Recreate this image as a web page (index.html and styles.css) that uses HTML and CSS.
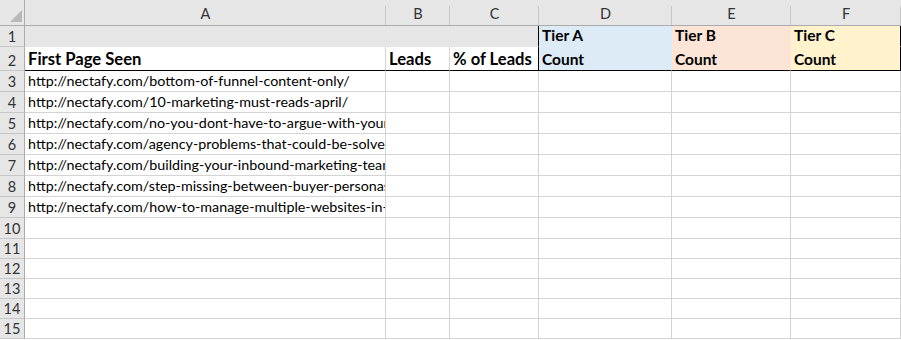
FILE: index.html
```html
<!DOCTYPE html>
<html>
<head>
<meta charset="utf-8">
<link rel="stylesheet" href="styles.css">
</head>
<body>
<div class="sheet">
  <div class="corner"><svg width="12" height="12" viewBox="0 0 12 12"><polygon points="12,0 12,12 0,12" fill="#b9b9b9"/></svg></div>
  <div class="colhead">A</div>
  <div class="colhead">B</div>
  <div class="colhead">C</div>
  <div class="colhead">D</div>
  <div class="colhead">E</div>
  <div class="colhead">F</div>

  <div class="rowhead">1</div>
  <div class="cell gray"></div>
  <div class="cell gray"></div>
  <div class="cell gray rb"></div>
  <div class="cell tier tier-a bold">Tier A</div>
  <div class="cell tier tier-b bold">Tier B</div>
  <div class="cell tier tier-c bold rb">Tier C</div>

  <div class="rowhead">2</div>
  <div class="cell bb bold big">First Page Seen</div>
  <div class="cell bb bold big">Leads</div>
  <div class="cell bb bold big rb">% of Leads</div>
  <div class="cell tier tier-a bb bold">Count</div>
  <div class="cell tier tier-b bb bold">Count</div>
  <div class="cell tier tier-c bb bold rb">Count</div>

  <div class="rowhead">3</div>
  <div class="cell url">http://nectafy.com/bottom-of-funnel-content-only/</div>
  <div class="cell"></div><div class="cell"></div><div class="cell"></div><div class="cell"></div><div class="cell"></div>

  <div class="rowhead">4</div>
  <div class="cell url">http://nectafy.com/10-marketing-must-reads-april/</div>
  <div class="cell"></div><div class="cell"></div><div class="cell"></div><div class="cell"></div><div class="cell"></div>

  <div class="rowhead">5</div>
  <div class="cell url">http://nectafy.com/no-you-dont-have-to-argue-with-your-boss/</div>
  <div class="cell"></div><div class="cell"></div><div class="cell"></div><div class="cell"></div><div class="cell"></div>

  <div class="rowhead">6</div>
  <div class="cell url">http://nectafy.com/agency-problems-that-could-be-solved/</div>
  <div class="cell"></div><div class="cell"></div><div class="cell"></div><div class="cell"></div><div class="cell"></div>

  <div class="rowhead">7</div>
  <div class="cell url">http://nectafy.com/building-your-inbound-marketing-team/</div>
  <div class="cell"></div><div class="cell"></div><div class="cell"></div><div class="cell"></div><div class="cell"></div>

  <div class="rowhead">8</div>
  <div class="cell url">http://nectafy.com/step-missing-between-buyer-personas/</div>
  <div class="cell"></div><div class="cell"></div><div class="cell"></div><div class="cell"></div><div class="cell"></div>

  <div class="rowhead">9</div>
  <div class="cell url">http://nectafy.com/how-to-manage-multiple-websites-in-hubspot/</div>
  <div class="cell"></div><div class="cell"></div><div class="cell"></div><div class="cell"></div><div class="cell"></div>

  <div class="rowhead">10</div>
  <div class="cell"></div><div class="cell"></div><div class="cell"></div><div class="cell"></div><div class="cell"></div><div class="cell"></div>
  <div class="rowhead">11</div>
  <div class="cell"></div><div class="cell"></div><div class="cell"></div><div class="cell"></div><div class="cell"></div><div class="cell"></div>
  <div class="rowhead">12</div>
  <div class="cell"></div><div class="cell"></div><div class="cell"></div><div class="cell"></div><div class="cell"></div><div class="cell"></div>
  <div class="rowhead">13</div>
  <div class="cell"></div><div class="cell"></div><div class="cell"></div><div class="cell"></div><div class="cell"></div><div class="cell"></div>
  <div class="rowhead">14</div>
  <div class="cell"></div><div class="cell"></div><div class="cell"></div><div class="cell"></div><div class="cell"></div><div class="cell"></div>
  <div class="rowhead">15</div>
  <div class="cell"></div><div class="cell"></div><div class="cell"></div><div class="cell"></div><div class="cell"></div><div class="cell"></div>
</div>
</body>
</html>
```
FILE: styles.css
```css
html, body {
  margin: 0;
  padding: 0;
  background: #ffffff;
  overflow: hidden;
}

.sheet {
  display: grid;
  grid-template-columns: 25px 361px 64px 89px 133px 119px 110px;
  grid-template-rows: 26px 21px 24px repeat(8, 21px) repeat(5, 20px);
  font-family: Lato, "Liberation Sans", sans-serif;
  color: #000;
}

.sheet > div {
  box-sizing: border-box;
  min-width: 0;
}

.corner {
  background: #e6e6e6;
  border-right: 1px solid #ababab;
  border-bottom: 1px solid #ababab;
  display: flex;
  align-items: flex-end;
  justify-content: flex-end;
  padding: 0 2px 3px 0;
}

.corner svg {
  display: block;
}

.colhead {
  background:
    linear-gradient(#c6c6c6, #c6c6c6) right 6px / 1px calc(100% - 6px) no-repeat,
    #e6e6e6;
  border-bottom: 1px solid #ababab;
  display: flex;
  align-items: center;
  justify-content: center;
  padding-top: 2px;
  font-size: 14.5px;
  color: #333;
}

.rowhead {
  background: #e6e6e6;
  border-right: 1px solid #ababab;
  border-bottom: 1px solid #c6c6c6;
  display: flex;
  align-items: flex-end;
  justify-content: center;
  padding-bottom: 1px;
  font-size: 14.5px;
  color: #333;
}

.cell {
  border-right: 1px solid #d4d4d4;
  border-bottom: 1px solid #d4d4d4;
  display: flex;
  align-items: flex-end;
  padding: 0 2px 2px 3px;
  font-size: 15px;
  white-space: nowrap;
  overflow: hidden;
  line-height: 18px;
}

.url {
  font-size: 14.3px;
  padding-bottom: 1px;
}

.tier {
  font-size: 15.5px;
}

.gray {
  background: #e7e6e6;
  border-color: #e7e6e6;
}

.tier-a {
  background: #ddebf7;
  border-color: #ddebf7;
}

.tier-b {
  background: #fce4d6;
  border-color: #fce4d6;
}

.tier-c {
  background: #fff2cc;
  border-color: #fff2cc;
}

.bold {
  font-weight: 700;
}

.big {
  font-size: 16.6px;
}

.sheet > .bb {
  border-bottom: 1px solid #000;
}

.sheet > .rb {
  border-right: 1px solid #000;
}

.gray.rb {
  border-bottom-color: #e7e6e6;
}
```
